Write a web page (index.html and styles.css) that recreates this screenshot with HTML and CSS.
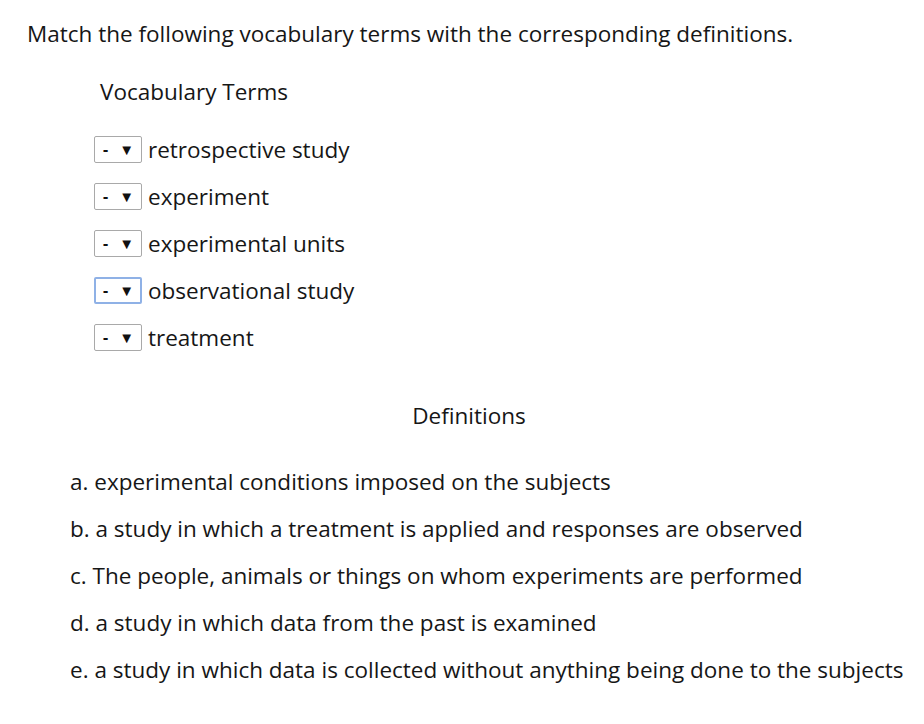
FILE: index.html
```html
<!DOCTYPE html>
<html>
<head>
<meta charset="utf-8">
<link rel="stylesheet" href="styles.css">
</head>
<body>
<div class="page">
  <p class="prompt">Match the following vocabulary terms with the corresponding definitions.</p>
  <div class="terms">
    <div class="terms-title">Vocabulary Terms</div>
    <ul class="term-list">
      <li class="term"><span class="sel"><span class="dash">-</span><span class="arrow">▼</span></span><span>retrospective study</span></li>
      <li class="term"><span class="sel"><span class="dash">-</span><span class="arrow">▼</span></span><span>experiment</span></li>
      <li class="term"><span class="sel"><span class="dash">-</span><span class="arrow">▼</span></span><span>experimental units</span></li>
      <li class="term"><span class="sel focused"><span class="dash">-</span><span class="arrow">▼</span></span><span>observational study</span></li>
      <li class="term"><span class="sel"><span class="dash">-</span><span class="arrow">▼</span></span><span>treatment</span></li>
    </ul>
  </div>
  <div class="defs-title">Definitions</div>
  <ul class="def-list">
    <li>a. experimental conditions imposed on the subjects</li>
    <li>b. a study in which a treatment is applied and responses are observed</li>
    <li>c. The people, animals or things on whom experiments are performed</li>
    <li>d. a study in which data from the past is examined</li>
    <li>e. a study in which data is collected without anything being done to the subjects</li>
  </ul>
</div>
</body>
</html>
```
FILE: styles.css
```css
html, body {
  margin: 0;
  padding: 0;
  background: #fff;
}
body {
  font-family: "Open Sans", "Liberation Sans", sans-serif;
  font-size: 22.5px;
  color: #161616;
}
.page {
  padding: 19px 13px 0 27px;
}
.prompt {
  margin: 0;
  line-height: 30px;
}
.terms {
  padding-left: 73px;
  margin-top: 28px;
}
.terms-title {
  line-height: 30px;
}
.term-list {
  list-style: none;
  margin: 27px 0 0 -6px;
  padding: 0;
  display: flex;
  flex-direction: column;
  gap: 17px;
}
.term {
  display: flex;
  align-items: center;
  gap: 6px;
  height: 30px;
}
.sel {
  box-sizing: border-box;
  width: 48px;
  height: 27px;
  border: 1px solid #a9a9a9;
  border-radius: 2px;
  display: flex;
  align-items: center;
  justify-content: space-between;
  padding: 0 7px 0 8px;
  font-size: 16px;
  font-weight: 700;
  color: #111;
}
.sel.focused {
  border: 2px solid #8fb1e6;
  padding: 0 6px 0 7px;
}
.arrow {
  font-size: 15px;
}
.defs-title {
  text-align: center;
  margin-top: 49px;
  line-height: 30px;
}
.def-list {
  list-style: none;
  margin: 36px 0 0 43px;
  padding: 0;
  display: flex;
  flex-direction: column;
  gap: 17px;
}
.def-list li {
  line-height: 30px;
}
```
